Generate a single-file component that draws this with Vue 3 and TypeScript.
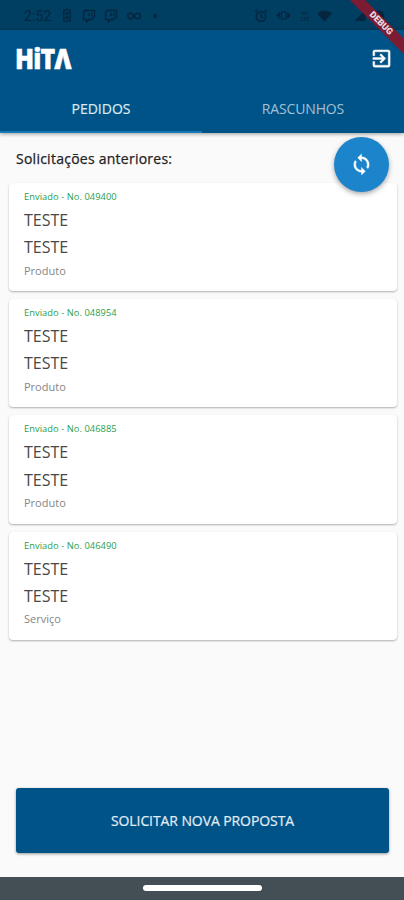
<script setup lang="ts">
interface Order {
  id: string
  title: string
  description: string
  kind: string
}

const orders: Order[] = [
  { id: '049400', title: 'TESTE', description: 'TESTE', kind: 'Produto' },
  { id: '048954', title: 'TESTE', description: 'TESTE', kind: 'Produto' },
  { id: '046885', title: 'TESTE', description: 'TESTE', kind: 'Produto' },
  { id: '046490', title: 'TESTE', description: 'TESTE', kind: 'Serviço' },
]
</script>

<template>
  <div class="screen">
    <div class="status">
      <span class="clock">2:52</span>
      <svg class="ic hourglass" viewBox="0 0 10 14"><path d="M1 1h8M1 13h8M1.500 1v12M8.500 1v12M3 3l2 3 2-3M3 11l2-3 2 3" /></svg>
      <svg v-for="n in 2" :key="n" class="ic twitch" viewBox="0 0 14 14"><path d="M3 1.500h9.500v6l-3 3H7L4.500 13v-2.500H1.500V4zM7 4v3M10 4v3" /></svg>
      <svg class="ic loop" viewBox="0 0 16 10"><circle cx="4.500" cy="5" r="2.700" /><circle cx="11.500" cy="5" r="2.700" /><path d="M7 5h2" /></svg>
      <span class="dot"></span>
      <span class="grow"></span>
      <svg class="ic alarm" viewBox="0 0 14 14"><circle cx="7" cy="7.500" r="4.800" /><path d="M7 4.500v3.200l2 1.300M1 3l2.500-2M13 3l-2.500-2" /></svg>
      <svg class="ic eye" viewBox="0 0 16 12"><path class="solid" d="M0 6l4-4v8zM16 6l-4-4v8z" /><rect x="5.500" y="2" width="5" height="8" rx="1" /></svg>
      <span class="net">Vo<br />LTE</span>
      <svg class="ic wifi" viewBox="0 0 16 12"><path class="solid" d="M0 3Q8-3 16 3L8 12z" /></svg>
      <svg class="ic signal" viewBox="0 0 12 12"><path class="solid" d="M12 0v12H0z" /></svg>
      <svg class="ic battery" viewBox="0 0 12 14"><circle class="solid" cx="6" cy="7" r="5.500" /></svg>
    </div>

    <header class="appbar">
      <div class="brand">
        <span class="logo">HiTΛ</span>
        <svg class="exit" viewBox="0 0 24 24"><path d="M10.090 15.590 11.500 17l5-5-5-5-1.410 1.410L12.670 11H3v2h9.670l-2.580 2.590zM19 3H5a2 2 0 0 0-2 2v4h2V5h14v14H5v-4H3v4a2 2 0 0 0 2 2h14a2 2 0 0 0 2-2V5a2 2 0 0 0-2-2z" /></svg>
      </div>
      <nav class="tabs">
        <div class="tab active"><span>PEDIDOS</span></div>
        <div class="tab"><span>RASCUNHOS</span></div>
      </nav>
    </header>

    <main class="content">
      <h1 class="heading">Solicitações anteriores:</h1>
      <div class="list">
        <article v-for="order in orders" :key="order.id" class="card">
          <div class="state">Enviado - No. {{ order.id }}</div>
          <div class="name">{{ order.title }}</div>
          <div class="name">{{ order.description }}</div>
          <div class="kind">{{ order.kind }}</div>
        </article>
      </div>
      <button class="submit"><span>SOLICITAR NOVA PROPOSTA</span></button>
    </main>

    <footer class="navbar"><span class="pill"></span></footer>

    <button class="fab" aria-label="Atualizar">
      <svg viewBox="0 0 24 24"><path d="M12 4V1L8 5l4 4V6c3.310 0 6 2.690 6 6 0 1.010-.25 1.970-.7 2.800l1.460 1.460A7.930 7.930 0 0 0 20 12c0-4.420-3.580-8-8-8zm0 14c-3.310 0-6-2.690-6-6 0-1.010.25-1.970.7-2.800L5.240 7.740A7.930 7.930 0 0 0 4 12c0 4.420 3.580 8 8 8v3l4-4-4-4v3z" /></svg>
    </button>
    <div class="ribbon"><span>DEBUG</span></div>
  </div>
</template>

<style>
body {
  background: #fafafa;
}
</style>

<style scoped>
.screen {
  position: relative;
  display: flex;
  flex-direction: column;
  width: 404px;
  height: 900px;
  overflow: hidden;
  background: #fafafa;
  font-family: 'Open Sans', 'Noto Sans', sans-serif;
}
.status {
  display: flex;
  align-items: center;
  flex: none;
  box-sizing: border-box;
  height: 30px;
  padding: 1px 19px 0 24px;
  background: #003e62;
  color: #05263f;
}
.clock {
  width: 38px;
  font: 14px/20px Roboto, sans-serif;
  letter-spacing: 0.1px;
}
.ic {
  flex: none;
  fill: none;
  stroke: currentColor;
  stroke-width: 1.4;
}
.ic .solid {
  fill: currentColor;
  stroke: none;
}
.hourglass { width: 10px; height: 13px; margin-right: 10px; }
.twitch { width: 14px; height: 14px; margin-right: 8px; }
.loop { width: 16px; height: 10px; margin-right: 11px; }
.dot { width: 4px; height: 4px; border-radius: 50%; background: currentColor; }
.grow { flex: 1; }
.alarm { width: 14px; height: 14px; margin-right: 8px; }
.eye { width: 15px; height: 11px; margin-right: 7px; }
.net { width: 14px; margin-right: 5px; font: 6px/6px Roboto, sans-serif; text-align: center; }
.wifi { width: 15px; height: 12px; margin-right: 22px; }
.signal { width: 12px; height: 11px; margin-right: 7px; }
.battery { width: 12px; height: 14px; }
.appbar {
  position: relative;
  flex: none;
  height: 103px;
  background: #005387;
  box-shadow: 0 1px 4px rgba(0, 0, 0, 0.4);
}
.brand {
  display: flex;
  align-items: center;
  justify-content: space-between;
  height: 56px;
  padding: 0 11px 0 15px;
}
.logo {
  color: #fff;
  font-size: 28px;
  font-weight: 800;
  line-height: 30px;
  letter-spacing: -1px;
  transform: translateY(-0.5px) scaleX(0.89);
  transform-origin: left center;
  -webkit-text-stroke: 0.4px currentColor;
}
.exit {
  width: 23px;
  height: 23px;
  fill: #fff;
  stroke: #fff;
  stroke-width: 0.4;
}
.tabs {
  display: flex;
  height: 47px;
}
.tab {
  display: flex;
  flex: 1;
  justify-content: center;
  box-sizing: border-box;
  padding-top: 13px;
  color: #a3c0d5;
  font-size: 14px;
  line-height: 20px;
  letter-spacing: -0.15px;
}
.tab.active {
  border-bottom: 2px solid #1478b9;
  color: #dce9f2;
  letter-spacing: 0;
  -webkit-text-stroke: 0.2px currentColor;
}
.content {
  display: flex;
  flex: 1;
  flex-direction: column;
}
.heading {
  margin: 16px 0 0 16px;
  color: #222;
  font-size: 14px;
  font-weight: 500;
  line-height: 20px;
  letter-spacing: 0.25px;
  -webkit-text-stroke: 0.25px currentColor;
}
.list {
  display: flex;
  flex-direction: column;
  gap: 8px;
  margin: 14px 7px 0 9px;
}
.card {
  box-sizing: border-box;
  height: 108.200px;
  padding: 6px 15px 0;
  border-radius: 4px;
  background: #fff;
  box-shadow: 0 1px 2px rgba(0, 0, 0, 0.3);
}
.state {
  color: #2a9e4b;
  font-size: 9.300px;
  line-height: 15px;
  letter-spacing: 0.06px;
}
.name {
  height: 27.300px;
  color: #484848;
  font-size: 16px;
  line-height: 32.600px;
}
.kind {
  color: #858585;
  font-size: 11px;
  line-height: 23.400px;
}
.submit {
  display: flex;
  align-items: center;
  justify-content: center;
  height: 65px;
  margin: auto 15px 24px 16px;
  padding: 0;
  border: 0;
  border-radius: 3px;
  background: #005387;
  box-shadow: 0 1px 3px rgba(0, 0, 0, 0.4);
  color: #e2edf5;
  font-family: inherit;
  font-size: 14px;
  letter-spacing: -0.09px;
  -webkit-text-stroke: 0.2px currentColor;
}
.navbar {
  display: flex;
  justify-content: center;
  flex: none;
  box-sizing: border-box;
  height: 23px;
  padding-top: 8px;
  background: #444e55;
}
.pill {
  width: 119px;
  height: 6px;
  border-radius: 3px;
  background: #fff;
}
.fab {
  position: absolute;
  top: 137px;
  left: 334px;
  display: flex;
  align-items: center;
  justify-content: center;
  width: 55px;
  height: 55px;
  padding: 0;
  border: 0;
  border-radius: 50%;
  background: #1b84cb;
  box-shadow: 0 2px 5px rgba(0, 0, 0, 0.35);
}
.fab svg {
  width: 23px;
  height: 23px;
  fill: #fff;
  stroke: #fff;
  stroke-width: 0.4;
}
.ribbon {
  position: absolute;
  top: 18px;
  left: 331px;
  width: 100px;
  height: 11px;
  background: #7b1c32;
  color: #e8dce0;
  font: 900 9px/11px Roboto, sans-serif;
  text-align: center;
  transform: rotate(45deg);
}
</style>
